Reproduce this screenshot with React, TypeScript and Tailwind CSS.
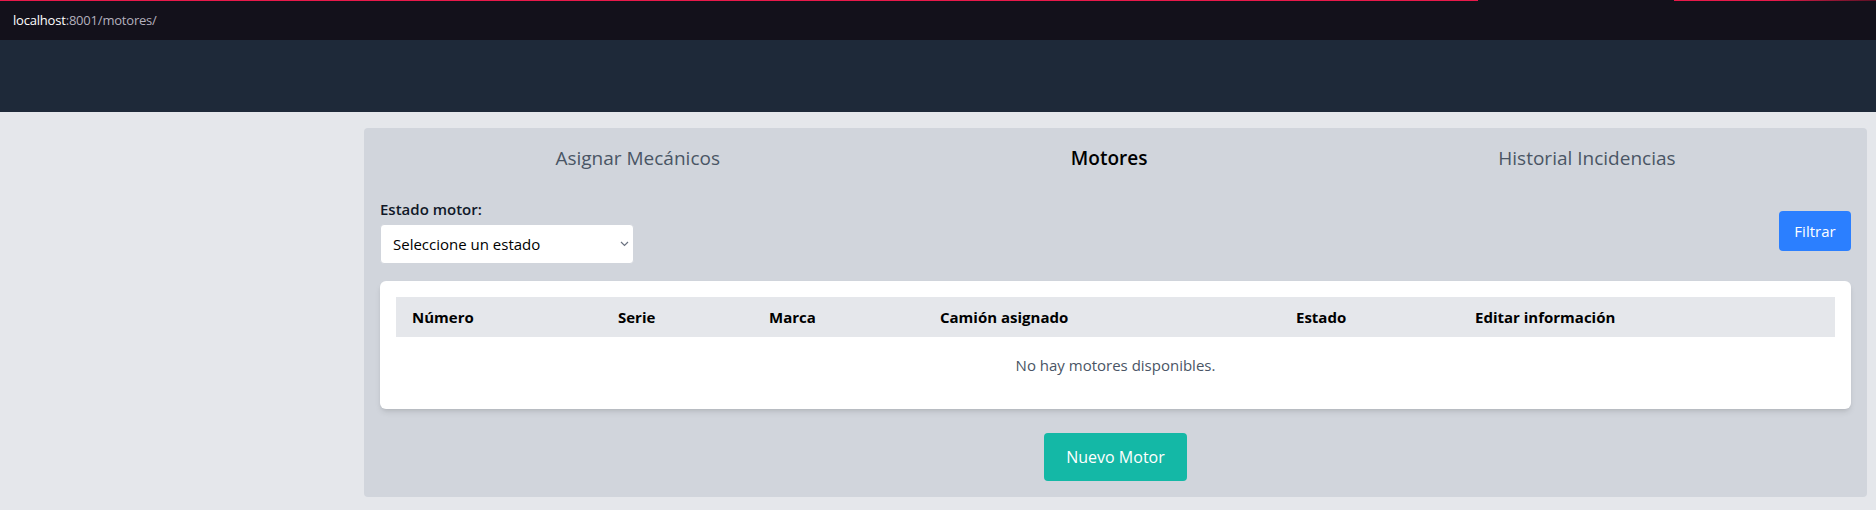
import { useState } from "react";

const font = { fontFamily: '"Open Sans", "Noto Sans", sans-serif' };

const columns = [
  { label: "Número", w: "w-[206px]" },
  { label: "Serie", w: "w-[151px]" },
  { label: "Marca", w: "w-[171px]" },
  { label: "Camión asignado", w: "w-[356px]" },
  { label: "Estado", w: "w-[179px]" },
  { label: "Editar información", w: "" },
];

const TopBar = () => (
  <div className="bg-[#13111b]">
    <div className="flex h-px">
      <div className="w-[1478px] bg-[#e8194a]" />
      <div className="w-[196px]" />
      <div className="flex-1 bg-gradient-to-r from-[#e8194a] via-[#e8194a] to-[#5a1024]" />
    </div>
    <div className="h-[39px] flex items-center px-[13px] text-[13px] tracking-[-0.2px]">
      <span className="text-white">localhost</span>
      <span className="text-[#b3b0be]">:8001/motores/</span>
    </div>
  </div>
);

const App = () => {
  const [estado, setEstado] = useState("");

  return (
    <div className="min-h-[510px] bg-gray-200" style={font}>
      <TopBar />
      <header className="h-[72px] bg-gray-800" />
      <div className="flex">
        <aside className="w-[364px] shrink-0" />
        <main className="flex-1 pt-4 pr-[9px]">
          <section className="bg-gray-300 rounded px-4 pt-4 pb-4">
            <nav className="flex justify-around h-[28px] items-center text-[19px]">
              <a href="#asignar" className="text-gray-600">Asignar Mecánicos</a>
              <a href="#motores" className="text-black font-semibold">Motores</a>
              <a href="#historial" className="text-gray-600">Historial Incidencias</a>
            </nav>

            <div className="mt-[26px] flex items-center justify-between">
              <div>
                <label className="block text-[15px] leading-[22px] font-semibold text-gray-900 mb-[4px]">
                  Estado motor:
                </label>
                <div className="relative w-[254px]">
                  <select
                    value={estado}
                    onChange={(e) => setEstado(e.target.value)}
                    className="appearance-none w-full h-10 bg-white rounded border border-gray-300 pl-3 pr-8 text-[15px] text-black"
                    style={font}
                  >
                    <option value="">Seleccione un estado</option>
                    <option value="activo">Activo</option>
                    <option value="reparacion">En reparación</option>
                  </select>
                  <svg
                    className="pointer-events-none absolute right-[5px] top-[17px] w-[9px] h-[6px]"
                    viewBox="0 0 9 6"
                    fill="none"
                    stroke="#6b7280"
                    strokeWidth="1.2"
                  >
                    <path d="M1 1l3.5 3.5L8 1" />
                  </svg>
                </div>
              </div>
              <button className="h-10 w-[72px] bg-blue-500 text-white text-[15px] rounded">
                Filtrar
              </button>
            </div>

            <div className="mt-[17px] bg-white rounded-md shadow-md p-4">
              <table className="w-full table-fixed border-collapse">
                <thead>
                  <tr className="bg-gray-200 h-10">
                    {columns.map((c) => (
                      <th key={c.label} className={`${c.w} text-left px-4 text-[15px] font-bold text-black`}>
                        {c.label}
                      </th>
                    ))}
                  </tr>
                </thead>
                <tbody>
                  <tr className="h-14">
                    <td colSpan={6} className="text-center text-[15px] text-gray-600">
                      No hay motores disponibles.
                    </td>
                  </tr>
                </tbody>
              </table>
            </div>

            <div className="mt-6 flex justify-center">
              <button className="h-12 w-[143px] bg-[#14b8a6] text-white text-[16px] rounded">
                Nuevo Motor
              </button>
            </div>
          </section>
        </main>
      </div>
    </div>
  );
};

export default App;
